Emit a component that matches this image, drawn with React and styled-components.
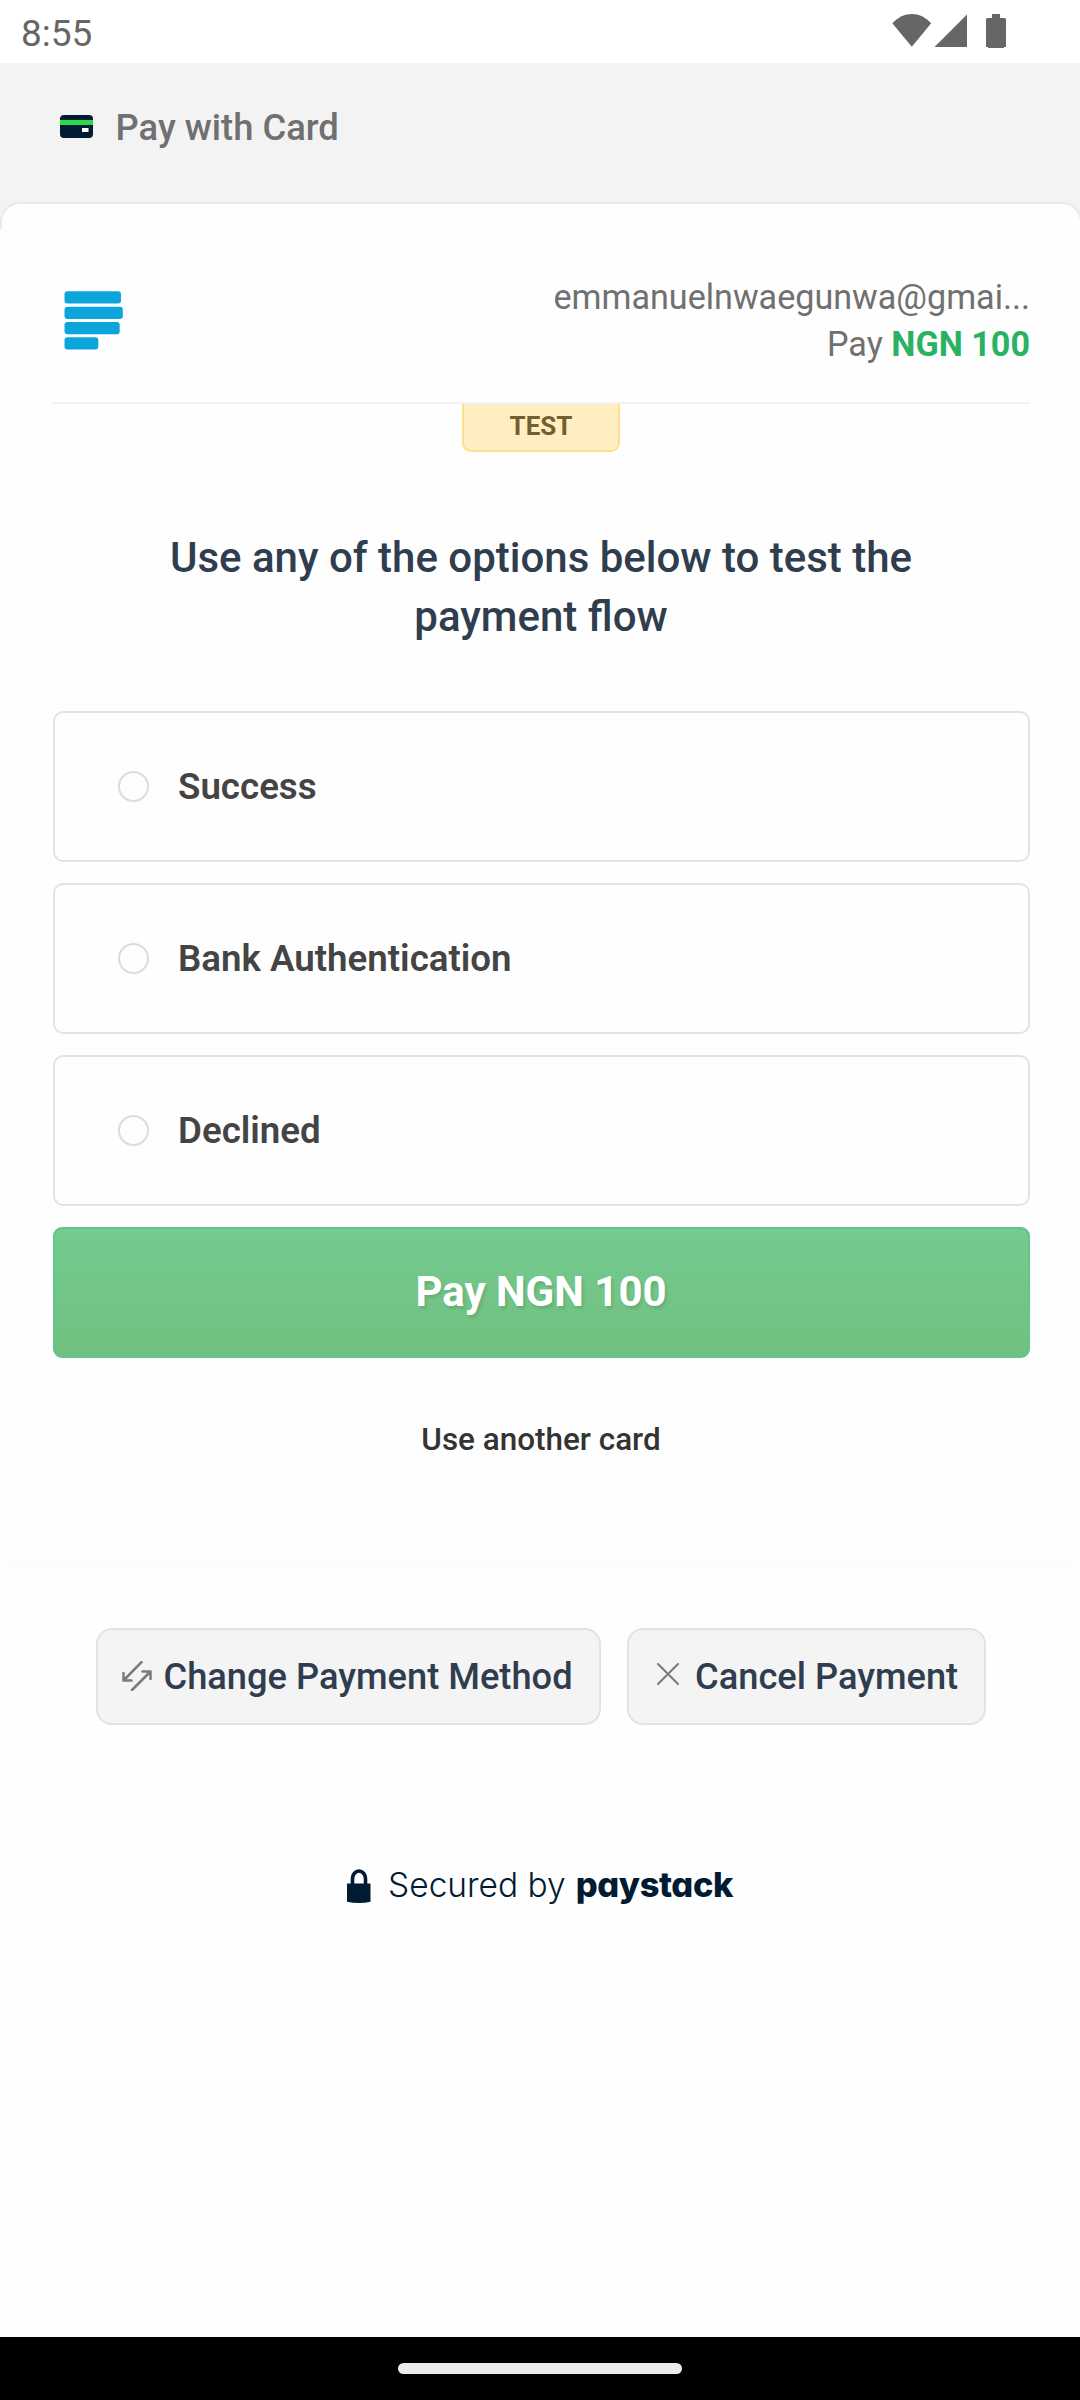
import React, { useState } from "react";
import styled, { createGlobalStyle } from "styled-components";

const GlobalStyle = createGlobalStyle`
  *, *::before, *::after { box-sizing: border-box; }
  body {
    margin: 0;
    background: #fff;
    font-family: Roboto, "Liberation Sans", sans-serif;
  }
  button { font-family: inherit; margin: 0; }
`;

const Screen = styled.div`
  display: flex;
  flex-direction: column;
  width: 1080px;
  height: 2400px;
  overflow: hidden;
  background: #fefefe;
`;

const StatusBar = styled.header`
  display: flex;
  justify-content: space-between;
  align-items: flex-start;
  flex: none;
  height: 63px;
  padding: 13px 72px 0 21px;
  background: #fff;
`;

const Clock = styled.span`
  font-size: 37px;
  line-height: 41px;
  color: #666;
`;

const StatusIcons = styled.svg`
  display: block;
  width: 116px;
  height: 36px;
  fill: #666;
`;

const ChannelHeader = styled.div`
  flex: none;
  height: 166px;
  background: #f3f3f3;
  overflow: hidden;
`;

const Channel = styled.div`
  display: flex;
  align-items: center;
  gap: 22.5px;
  height: 139px;
  padding: 0 60px 9px;
`;

const CardIcon = styled.svg`
  display: block;
  width: 33px;
  height: 23px;
  margin-top: -3px;
`;

const ChannelName = styled.span`
  font-size: 36.4px;
  font-weight: 500;
  line-height: 40px;
  color: #707070;
`;

const CardLip = styled.div`
  height: 40px;
  margin-right: -2px;
  border: 2px solid #e9e9e9;
  border-radius: 20px 20px 0 0;
  background: #fefefe;
`;

const Card = styled.main`
  flex: none;
  height: 1333px;
  padding: 0 50px 0 53px;
  border-radius: 0 0 20px 20px;
  background: #fefefe;
  box-shadow: 0 8px 12px rgba(0, 0, 0, 0.012);
`;

const Merchant = styled.div`
  display: flex;
  justify-content: space-between;
  align-items: center;
  height: 175px;
  padding: 45px 0 34px 11px;
  border-bottom: 2px solid #f2f2f2;
`;

const Logo = styled.svg`
  display: block;
  width: 60px;
  height: 60px;
  fill: #0ba5dc;
`;

const Customer = styled.div`
  font-size: 34.15px;
  line-height: 47px;
  text-align: right;
  color: #707070;
`;

const Amount = styled.strong`
  font-weight: 700;
  color: #29b263;
`;

const TestBadge = styled.div`
  width: 158px;
  height: 48px;
  margin: 0 0 0 409px;
  border: 2px solid #ffe08a;
  border-top: 0;
  border-radius: 0 0 9px 9px;
  background: #ffeec2;
  font-size: 26px;
  font-weight: 700;
  line-height: 44px;
  text-align: center;
  color: #755e2b;
`;

const Title = styled.h1`
  margin: 76px 1px 65px 0;
  font-size: 42px;
  font-weight: 500;
  line-height: 59px;
  text-align: center;
  color: #2f3d4e;
`;

const Options = styled.div`
  display: flex;
  flex-direction: column;
  gap: 21px;
`;

const Option = styled.label`
  display: flex;
  align-items: center;
  gap: 29px;
  height: 151px;
  padding: 0 63px;
  border: 2px solid #e3e3e3;
  border-radius: 10px;
  font-size: 36.7px;
  font-weight: 600;
  line-height: 42px;
  color: #444;
`;

const Radio = styled.input`
  appearance: none;
  flex: none;
  width: 31px;
  height: 31px;
  margin: 0;
  border: 2px solid #dcdcdc;
  border-radius: 50%;
  background: ${(p) => (p.checked ? "#3bb75e" : "#fefefe")};
`;

const PayButton = styled.button`
  height: 131px;
  padding: 0 1px 3px 0;
  border: 2px solid #5fc68c;
  border-radius: 9px;
  background: linear-gradient(#74ca90, #70c17f);
  font-size: 42px;
  font-weight: 700;
  color: #fff;
  text-shadow: 2px 3px 3px rgba(0, 0, 0, 0.11);
`;

const CardLink = styled.button`
  display: block;
  margin: 62px auto 0;
  padding: 0 1px 0 0;
  border: 0;
  background: none;
  font-size: 31.45px;
  font-weight: 500;
  line-height: 40px;
  color: #333;
`;

const Actions = styled.div`
  display: flex;
  justify-content: center;
  flex: none;
  gap: 26px;
  margin-top: 66px;
  padding-left: 2px;
`;

const ActionButton = styled.button`
  display: flex;
  align-items: center;
  gap: ${(p) => p.$gap}px;
  width: ${(p) => p.$width}px;
  height: 97px;
  padding: 0 0 0 ${(p) => p.$inset}px;
  border: 2px solid #e2e2e2;
  border-radius: 16px;
  background: #f4f4f4;
  font-size: 36.25px;
  font-weight: 500;
  line-height: 42px;
  white-space: nowrap;
  color: #2f3d4e;
`;

const ActionIcon = styled.svg`
  display: block;
  flex: none;
  width: ${(p) => p.$size}px;
  height: ${(p) => p.$size}px;
  margin-top: ${(p) => p.$lift}px;
  fill: none;
  stroke: #7a7a7a;
  stroke-width: ${(p) => p.$stroke};
  stroke-linecap: round;
  stroke-linejoin: round;
`;

const Secured = styled.footer`
  display: flex;
  justify-content: center;
  align-items: flex-start;
  flex: none;
  margin-top: 144px;
  color: #011b33;
  font-family: Inter, "Liberation Sans", sans-serif;
`;

const Lock = styled.svg`
  display: block;
  width: 24px;
  height: 35px;
  margin-right: 17px;
`;

const SecuredText = styled.span`
  margin-right: 10px;
  font-size: 33.5px;
  font-weight: 300;
  line-height: 33px;
`;

const Wordmark = styled.span`
  font-size: 34.4px;
  font-weight: 800;
  line-height: 32px;
  letter-spacing: -0.4px;
  font-feature-settings: "cv11";
`;

const NavBar = styled.div`
  display: flex;
  justify-content: center;
  flex: none;
  height: 63px;
  margin-top: auto;
  padding-top: 26px;
  background: #000;
`;

const NavHandle = styled.div`
  width: 284px;
  height: 11px;
  border-radius: 6px;
  background: #ebebeb;
`;

const OUTCOMES = ["Success", "Bank Authentication", "Declined"];

export default function App() {
  const [outcome, setOutcome] = useState(null);

  return (
    <Screen>
      <GlobalStyle />
      <StatusBar>
        <Clock>8:55</Clock>
        <StatusIcons viewBox="0 0 116 36">
          <path d="M0.300 10.300C6 4 13 0.900 19.800 0.900S33.600 4 39.200 10.300L19.800 33.800z" />
          <path d="M42.500 34L75 1.500V34z" />
          <path d="M100 1h8v4h4.500q1.500 0 1.500 1.500V34h-2v1H96v-1h-2V6.500Q94 5 95.500 5H100z" />
        </StatusIcons>
      </StatusBar>

      <ChannelHeader>
        <Channel>
          <CardIcon viewBox="0 0 33 23">
            <rect width="33" height="23" rx="4" fill="#011b33" />
            <rect y="5" width="33" height="5" fill="#2bd94f" />
            <rect x="22" y="13" width="6.500" height="4" fill="#fff" />
          </CardIcon>
          <ChannelName>Pay with Card</ChannelName>
        </Channel>
        <CardLip />
      </ChannelHeader>

      <Card>
        <Merchant>
          <Logo viewBox="0 0 60 60">
            <rect x=".5" y="0.300" width="56.500" height="12.200" rx="3" />
            <rect x=".5" y="15.700" width="58.300" height="12.200" rx="3" />
            <rect x=".5" y="31" width="55.200" height="12.200" rx="3" />
            <rect x=".5" y="46.300" width="33.800" height="12.200" rx="3" />
          </Logo>
          <Customer>
            <div>emmanuelnwaegunwa@gmai...</div>
            <div>Pay <Amount>NGN 100</Amount></div>
          </Customer>
        </Merchant>
        <TestBadge>TEST</TestBadge>

        <Title>
          Use any of the options below to test the
          <br />
          payment flow
        </Title>

        <Options>
          {OUTCOMES.map((name) => (
            <Option key={name}>
              <Radio
                type="radio"
                name="outcome"
                checked={outcome === name}
                onChange={() => setOutcome(name)}
              />
              {name}
            </Option>
          ))}
          <PayButton type="button">Pay NGN 100</PayButton>
        </Options>
        <CardLink type="button">Use another card</CardLink>
      </Card>

      <Actions>
        <ActionButton type="button" $width={505} $inset={24} $gap={11.5}>
          <ActionIcon viewBox="0 0 30 30" $size={30} $lift={-2} $stroke={2.5}>
            <path d="M19.500 1.200L1.500 19.500M1.500 12V19.500H9.500" />
            <path d="M10 29L28.500 10.500M20.500 10.500H28.500V18" />
          </ActionIcon>
          Change Payment Method
        </ActionButton>
        <ActionButton type="button" $width={359} $inset={28} $gap={16}>
          <ActionIcon viewBox="0 0 22 22" $size={22} $lift={-5} $stroke={2}>
            <path d="M1 1L21 21M21 1L1 21" />
          </ActionIcon>
          Cancel Payment
        </ActionButton>
      </Actions>

      <Secured>
        <Lock viewBox="0 0 24 35">
          <path d="M5.500 16V9.500a6.500 7.500 0 0 1 13 0V16" fill="none" stroke="#011b33" strokeWidth="3.600" />
          <path d="M0 14.500H23.500V32.800Q12 35.200 0 32.800z" fill="#011b33" />
        </Lock>
        <SecuredText>Secured by</SecuredText>
        <Wordmark>paystack</Wordmark>
      </Secured>

      <NavBar>
        <NavHandle />
      </NavBar>
    </Screen>
  );
}
